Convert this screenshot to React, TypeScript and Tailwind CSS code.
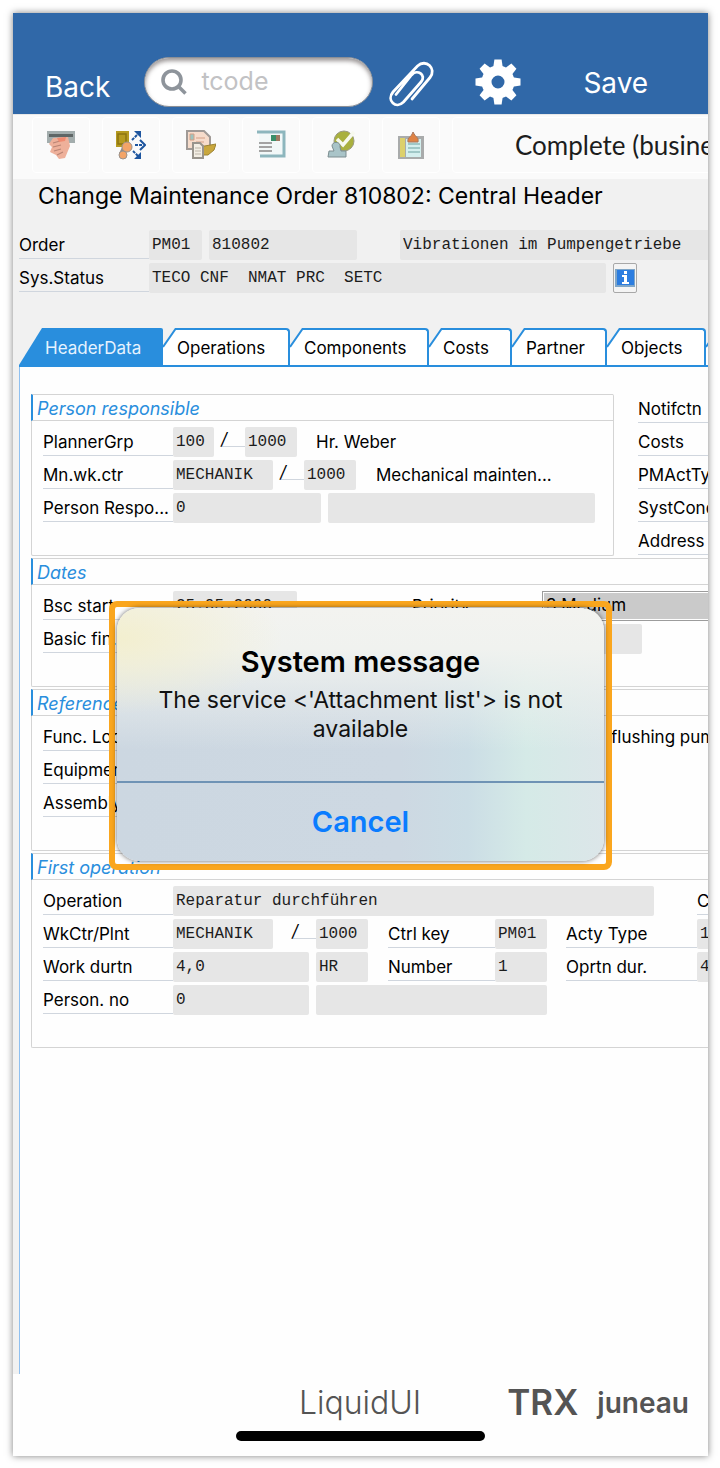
import clsx from 'clsx';
import React from 'react';

const Label = ({ text, htmlFor, className = 'w-[130px]' }: any) => (
  <label
    htmlFor={htmlFor}
    className={clsx(
      'h-[29px] shrink-0 truncate border-b border-[#d0d6de] text-[17px] leading-[30px]',
      className,
    )}
  >
    {text}
  </label>
);

const Field = ({ id, name, value = '', className = '' }: any) => (
  <input
    id={id}
    aria-label={id ? undefined : name}
    readOnly
    defaultValue={value}
    className={clsx(
      "h-[30px] shrink-0 rounded-xs bg-[#e6e6e6] px-[3px] font-['Liberation_Mono',monospace] text-base text-[#1c1c1c] outline-none",
      className,
    )}
  />
);

const Slash = () => (
  <span className="h-5 w-6 shrink-0 border-b border-[#d0d6de] text-[17px] leading-6 italic">
    /
  </span>
);

const Row = ({ children }: { children?: React.ReactNode }) => (
  <div className="flex h-[33px] items-start">{children}</div>
);

const Group = ({ title, open = true, children, className = '' }: any) => (
  <section
    className={clsx(
      'border-b border-[#d4d4d4]',
      open ? 'rounded-bl-xs border-l' : 'rounded-xs border-x',
      className,
    )}
  >
    <h2 className="-ml-px h-[27px] border-t border-b border-l-2 border-[#d4d4d4] border-l-[#298edd] pl-1 text-[18px] leading-[27px] text-[#298edd] italic">
      {title}
    </h2>
    <div className="pt-1.5 pb-[29px] pl-[11px]">{children}</div>
  </section>
);

const Tab = ({ label, width }: { label: string; width: string }) => (
  <button type="button" role="tab" className={clsx('flex h-[37px] shrink-0', width)}>
    <svg width="14" height="37" viewBox="0 0 14 37" className="shrink-0">
      <path d="M0 19 L13 1 H14 V37 H0Z" fill="#fff" />
      <path d="M0 19 L12.500 1 H14" fill="none" stroke="#298edd" strokeWidth="2" />
    </svg>
    <span className="h-full flex-1 rounded-tr-sm border-t-2 border-r-2 border-[#298edd] bg-white text-left text-[17px] leading-9">
      {label}
    </span>
  </button>
);

const ToolButton = ({ name, children }: any) => (
  <button
    type="button"
    aria-label={name}
    className="flex h-14 w-[58px] shrink-0 items-center justify-center rounded-sm border border-white"
  >
    <svg width="30" height="30" viewBox="0 0 30 30">
      {children}
    </svg>
  </button>
);

const Paperclip = () => (
  <svg width="46" height="46" viewBox="0 0 46 46" fill="none" stroke="#fff" strokeWidth="2.8" strokeLinecap="round">
    <path d="M23 38 L41 16.500 C48 8 37 -3 28.500 5 L4 31 C-3 39.500 7 48.500 14.500 41 L32 21 C38 14 28 7.500 22.500 14 L7 33.500" />
  </svg>
);

const Gear = () => (
  <svg width="46" height="46" viewBox="-23 -23 46 46">
    <g fill="#fff">
      {[0, 45, 90, 135, 180, 225, 270, 315].map((angle) => (
        <path key={angle} d="M-5 -13 L-3.600 -22.500 H3.600 L5 -13Z" transform={`rotate(${angle})`} />
      ))}
      <path
        fillRule="evenodd"
        d="M0 -16.500 A16.500 16.500 0 1 1 0 16.500 A16.500 16.500 0 1 1 0 -16.500Z M0 -6.500 A6.500 6.500 0 1 0 0 6.500 A6.500 6.500 0 1 0 0 -6.500Z"
      />
    </g>
  </svg>
);

const tabs = [
  { label: 'Operations', width: 'w-[127px]' },
  { label: 'Components', width: 'w-[139px]' },
  { label: 'Costs', width: 'w-[83px]' },
  { label: 'Partner', width: 'w-[95px]' },
  { label: 'Objects', width: 'w-[99px]' },
];

const sideLabels = ['Notifctn', 'Costs', 'PMActType', 'SystCond.', 'Address'];

const Header = () => (
  <header className="flex h-[101px] bg-[#3068a8] text-[28px] text-white">
    <button type="button" className="mt-[54px] ml-8 h-10 leading-10">
      Back
    </button>
    <label className="mt-11 ml-[34px] flex h-[50px] w-[229px] items-center rounded-full border border-[#8b8f96] bg-white pl-4 shadow-[inset_0_3px_4px_rgba(60,50,50,0.5)]">
      <svg width="26" height="26" viewBox="0 0 26 26" fill="none" stroke="#8e949b" strokeWidth="3.6">
        <circle cx="11" cy="11" r="9" />
        <path d="M17.500 17.500 L24.500 24.500" />
      </svg>
      <input
        type="text"
        aria-label="Transaction code"
        placeholder="tcode"
        className="ml-3.5 w-36 bg-transparent text-[25px] text-black outline-none placeholder:text-[#c2c2c4]"
      />
    </label>
    <button type="button" aria-label="Attachments" className="mt-12 ml-4 h-[46px]">
      <Paperclip />
    </button>
    <button type="button" aria-label="Settings" className="mt-[46px] ml-10 h-[46px]">
      <Gear />
    </button>
    <button type="button" className="mt-[50px] ml-[62px] h-10 leading-10">
      Save
    </button>
  </header>
);

const Toolbar = () => (
  <div className="flex h-[65px] gap-3 overflow-hidden border-t border-[#e8e8e8] bg-[#fafafa] pt-0.5 pl-[19px]">
    <ToolButton name="Release">
      <path d="M1 1 H29 V13 H1Z" fill="#a3adad" />
      <path d="M3 4 H27 V7 H3Z" fill="#5f6666" />
      <path d="M7 8 L22 7 L24 16 L19 28 L13 29 L10 25 L4 22 L6 17 L3 14Z" fill="#eeb09a" />
      <path d="M7 13 L14 11 M7 17 L15 15 M8 21 L15 19 M11 25 L17 22" stroke="#b98474" strokeWidth="1.2" />
      <path d="M11 8 L20 7 L19 11 L13 12Z" fill="#f08a70" />
    </ToolButton>
    <ToolButton name="Schedule">
      <path d="M0 1 H13 V17 H0Z" fill="#b59a20" />
      <path d="M2 4 H10 V14 H2Z" fill="none" stroke="#8c7410" strokeWidth="1.5" />
      <path d="M9 16 L5 24" stroke="#8d8d8d" strokeWidth="4" />
      <circle cx="11" cy="17" r="5" fill="#f3a468" stroke="#9a928c" />
      <circle cx="7" cy="25" r="4" fill="#f3a468" stroke="#9a928c" />
      <path d="M16 10 L23 3 M19 15 H27 M17 21 L23 27" stroke="#1d559f" strokeWidth="2" strokeDasharray="3 1" />
      <path d="M18 1 H25 V8Z M25 22 V29 H18Z" fill="#1d559f" />
      <path d="M24 10 L29 15 L24 20" fill="none" stroke="#1d559f" strokeWidth="2" />
    </ToolButton>
    <ToolButton name="Copy">
      <path d="M1 1 H18 L24 7 V19 H1Z" fill="#f6dccb" stroke="#a09a96" strokeWidth="2" />
      <path d="M4 4 H8 V10 H4Z M10 8 H19 M10 12 H18" fill="#9ec4be" stroke="#d4a086" />
      <path d="M13 17 L30 14 L28 20 L22 25 H13Z" fill="#c9a73d" stroke="#9c8333" />
      <path d="M7 13 H14 L17 16 V28 H7Z" fill="#f3eee4" stroke="#99948c" strokeWidth="2" />
      <path d="M9 18 H15 M9 21 H15 M9 24 H15" stroke="#bdb5a8" />
    </ToolButton>
    <ToolButton name="Mail">
      <path d="M3 2 H27 V25 H3Z" fill="#f2f8f8" />
      <path d="M1 2 H28 V26 H4" fill="none" stroke="#8db6bd" strokeWidth="3" />
      <path d="M15 5 H24 V11 H15Z" fill="#398f6a" />
      <path d="M20 5 H24 V11 H20Z" fill="#9e7a63" />
      <path d="M3 13 H16 M3 17 H16 M3 21 H16" stroke="#a3a3a3" strokeWidth="2" />
    </ToolButton>
    <ToolButton name="Approve">
      <circle cx="18" cy="11" r="10" fill="#a9b03e" stroke="#9a9a82" />
      <path d="M11 9 L17 15 L28 2" fill="none" stroke="#f7f9ee" strokeWidth="3.5" />
      <path d="M3 21 H8 L6 16 C6 11 15 11 14 17 L15 21 H20 V27 H2Z" fill="#a9c4c8" stroke="#7c8d90" />
    </ToolButton>
    <ToolButton name="Clipboard">
      <path d="M2 6 H28 V29 H2Z" fill="#a9abab" />
      <path d="M4 8 H9 V27 H4Z" fill="#dcd06b" />
      <path d="M10 9 H25 V27 H10Z" fill="#d4efee" />
      <path d="M12 14 H24 M12 18 H24 M12 22 H24" stroke="#8fbcba" strokeWidth="1.5" />
      <path d="M12 12 C11 7 15 8 17 2 C20 8 23 7 22 12Z" fill="#df8244" stroke="#a8775c" />
    </ToolButton>
    <button
      type="button"
      className="h-14 shrink-0 rounded-sm border border-white px-[62px] font-['Lato',sans-serif] text-[26px] whitespace-nowrap text-[#1c1c1c]"
    >
      Complete (business)
    </button>
  </div>
);

const MessageDialog = () => (
  <div className="absolute inset-x-0 top-[588px] flex justify-center">
    <div className="w-[503px] rounded-lg border-[6px] border-[#faa61e] px-0.5 pt-px pb-[3px]">
      <div
        role="alertdialog"
        aria-labelledby="msg-title"
        className="rounded-[22px] bg-[radial-gradient(ellipse_at_0%_12%,#f3efcf_0%,transparent_24%),linear-gradient(to_bottom,#f3f3f0_0%,#f0f2ef_16%,transparent_56%),linear-gradient(to_right,#ccd7e1_0%,#cdd8e2_58%,#cbdde5_72%,#d5eae7_84%,#dce6e9_100%)] text-center shadow-[0_0_5px_rgba(0,0,0,0.6)]"
      >
        <div className="h-[173px] px-9 pt-[34px]">
          <h1 id="msg-title" className="mb-1 text-[29px] leading-10 font-semibold">
            System message
          </h1>
          <p className="text-[23px] leading-[29px] text-[#111]">
            The service &lt;'Attachment list'&gt; is not available
          </p>
        </div>
        <button
          type="button"
          className="h-20 w-full border-t-2 border-[#6f93b5] text-[29px] font-semibold text-[#0a7cff]"
        >
          Cancel
        </button>
      </div>
    </div>
  </div>
);

export default function App() {
  return (
    <div className="flex min-h-screen flex-col bg-white pt-[13px] pr-3 pb-3 pl-[13px] font-['Inter',sans-serif] text-black">
      <div className="relative flex flex-1 flex-col overflow-clip shadow-[0_0_7px_rgba(0,0,0,0.5)]">
        <Header />
        <Toolbar />

        <main className="flex flex-1 flex-col bg-[#f1f1f1] pl-1.5">
          <h1 className="h-[51px] pl-[19px] text-[23px] leading-[34px] whitespace-nowrap">
            Change Maintenance Order 810802: Central Header
          </h1>
          <Row>
            <Label text="Order" htmlFor="order" />
            <Field id="order" value="PM01" className="w-[53px]" />
            <Field name="Order number" value="810802" className="ml-[7px] w-[148px]" />
            <Field name="Description" value="Vibrationen im Pumpengetriebe" className="ml-[43px] w-[320px]" />
          </Row>
          <Row>
            <Label text="Sys.Status" htmlFor="status" />
            <Field id="status" value="TECO CNF  NMAT PRC  SETC" className="w-[457px]" />
            <button
              type="button"
              aria-label="Info"
              className="ml-[7px] flex h-[30px] w-6 items-center justify-center rounded-xs border border-[#a8a8a8] bg-[#f4f4f4]"
            >
              <svg width="20" height="18" viewBox="0 0 20 18">
                <path d="M0 0 H20 V18 H0Z" fill="#7fa6c8" />
                <path d="M2 1 H19 V16 H2Z" fill="#2c7de0" />
                <path d="M9 2 H12 V5 H9Z M7 6 H12 V13 H14 V15 H7 V13 H9 V8 H7Z" fill="#fff" />
              </svg>
            </button>
          </Row>

          <div role="tablist" className="mt-8 flex overflow-hidden border-b-2 border-[#298edd]">
            <button type="button" role="tab" aria-selected="true" className="flex h-[37px] w-36 shrink-0 text-[#e6f3ff]">
              <svg width="23" height="37" viewBox="0 0 23 37" className="shrink-0">
                <path d="M0 37 L23 0 V37Z" fill="#298edd" />
              </svg>
              <span className="h-full flex-1 rounded-tr-xs bg-[#298edd] pl-[3px] text-left text-[17px] leading-10">
                HeaderData
              </span>
            </button>
            {tabs.map((tab) => (
              <Tab key={tab.label} {...tab} />
            ))}
            <Tab label="" width="w-20" />
          </div>

          <div className="flex flex-1 flex-col gap-0.5 overflow-hidden border-l border-[#8fc0f0] bg-[#fefefe] pt-[27px] pl-[11px]">
            <div className="flex">
              <Group title="Person responsible" open={false} className="w-[583px] shrink-0">
                <Row>
                  <Label text="PlannerGrp" htmlFor="planner" />
                  <Field id="planner" value="100" className="mr-[7px] w-[41px]" />
                  <Slash />
                  <Field name="Planning plant" value="1000" className="w-[52px]" />
                  <span className="ml-[19px] text-[17px] leading-[30px]">Hr. Weber</span>
                </Row>
                <Row>
                  <Label text="Mn.wk.ctr" htmlFor="workctr" />
                  <Field id="workctr" value="MECHANIK" className="mr-[7px] w-[100px]" />
                  <Slash />
                  <Field name="Work center plant" value="1000" className="w-[52px]" />
                  <span className="ml-5 text-[17px] leading-[30px]">Mechanical mainten...</span>
                </Row>
                <Row>
                  <Label text="Person Respo..." htmlFor="person" />
                  <Field id="person" value="0" className="w-[148px]" />
                  <Field name="Person name" className="ml-[7px] w-[267px]" />
                </Row>
              </Group>
              <div className="ml-6 flex shrink-0 flex-col gap-1">
                {sideLabels.map((text) => (
                  <Label key={text} text={text} className="w-[110px]" />
                ))}
              </div>
            </div>

            <Group title="Dates">
              <Row>
                <Label text="Bsc start" htmlFor="start" />
                <Field id="start" value="25.05.2000" className="w-[124px]" />
                <Label text="Priority" htmlFor="priority" className="ml-[115px] w-[130px]" />
                <select
                  id="priority"
                  className="h-[30px] w-[220px] shrink-0 appearance-none border border-[#9c9c9c] bg-[#cacaca] pl-[3px] text-[17px] shadow-[inset_0_0_0_1px_#fff]"
                >
                  <option>3 Medium</option>
                </select>
              </Row>
              <Row>
                <Label text="Basic fin." htmlFor="finish" />
                <Field id="finish" className="w-[124px]" />
                <Field name="Revision" className="ml-[245px] w-[100px]" />
              </Row>
            </Group>

            <Group title="Reference">
              <Row>
                <Label text="Func. Loc." htmlFor="funcloc" />
                <Field id="funcloc" className="w-[267px]" />
                <span className="ml-[171px] text-[17px] leading-[30px] whitespace-nowrap">flushing pump</span>
              </Row>
              <Row>
                <Label text="Equipment" htmlFor="equipment" />
                <Field id="equipment" className="w-[267px]" />
              </Row>
              <Row>
                <Label text="Assembly" htmlFor="assembly" />
                <Field id="assembly" className="w-[267px]" />
              </Row>
            </Group>

            <Group title="First operation">
              <Row>
                <Label text="Operation" htmlFor="operation" />
                <Field id="operation" value="Reparatur durchführen" className="w-[481px]" />
                <Label text="CC" className="ml-[43px] w-20" />
              </Row>
              <Row>
                <Label text="WkCtr/Plnt" htmlFor="opctr" />
                <Field id="opctr" value="MECHANIK" className="mr-[19px] w-[100px]" />
                <Slash />
                <Field name="Operation plant" value="1000" className="w-[52px]" />
                <Label text="Ctrl key" htmlFor="ctrl" className="ml-5 w-[107px]" />
                <Field id="ctrl" value="PM01" className="w-[52px]" />
                <Label text="Acty Type" htmlFor="acty" className="ml-[19px] w-[131px]" />
                <Field id="acty" value="1410" className="w-20" />
              </Row>
              <Row>
                <Label text="Work durtn" htmlFor="durtn" />
                <Field id="durtn" value="4,0" className="w-[136px]" />
                <Field name="Unit" value="HR" className="ml-[7px] w-[52px]" />
                <Label text="Number" htmlFor="number" className="ml-5 w-[107px]" />
                <Field id="number" value="1" className="w-[52px]" />
                <Label text="Oprtn dur." htmlFor="oprtn" className="ml-[19px] w-[131px]" />
                <Field id="oprtn" value="4,0" className="w-20" />
              </Row>
              <Row>
                <Label text="Person. no" htmlFor="personno" />
                <Field id="personno" value="0" className="w-[136px]" />
                <Field name="Person" className="ml-[7px] w-[231px]" />
              </Row>
            </Group>
          </div>
        </main>

        <footer className="flex h-[82px] flex-col items-center bg-[#fefefe] text-[#545454]">
          <div className="flex h-[57px] w-full items-center justify-end pr-[19px]">
            <span className="text-[32px] font-light">LiquidUI</span>
            <span className="ml-[86px] text-[35px] font-semibold">TRX</span>
            <span className="ml-[19px] text-[28px] font-semibold">juneau</span>
          </div>
          <div className="h-[10px] w-[249px] rounded-full bg-black" />
        </footer>

        <MessageDialog />
      </div>
    </div>
  );
}
